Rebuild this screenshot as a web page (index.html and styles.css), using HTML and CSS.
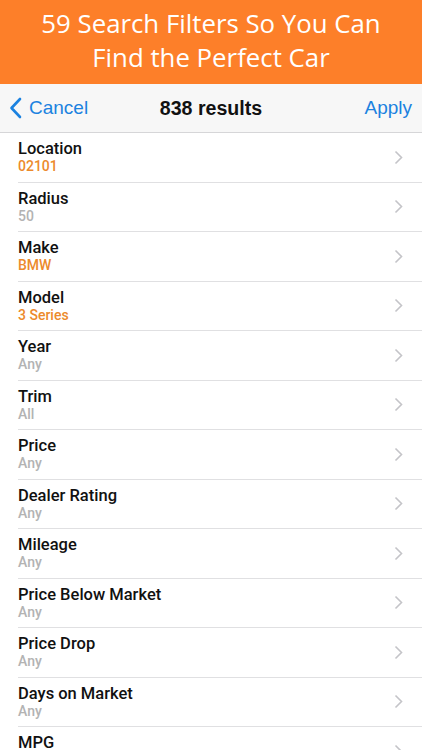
FILE: index.html
```html
<!DOCTYPE html>
<html>
<head>
<meta charset="utf-8">
<link rel="stylesheet" href="styles.css">
</head>
<body>
<header class="promo">
  <div class="promo-text">59 Search Filters So You Can<br>Find the Perfect Car</div>
</header>
<nav class="navbar">
  <div class="nav-left">
    <svg class="back" width="13" height="22" viewBox="0 0 13 22"><path d="M11 2 L2.5 11 L11 20" fill="none" stroke="#1b82e0" stroke-width="2.6" stroke-linecap="round" stroke-linejoin="round"/></svg>
    <span>Cancel</span>
  </div>
  <div class="nav-title">838 results</div>
  <div class="nav-right">Apply</div>
</nav>
<ul class="list">
  <li class="row"><div class="txt"><div class="label">Location</div><div class="value orange">02101</div></div><svg class="chev" width="9" height="15" viewBox="0 0 9 15"><path d="M1.5 1.5 L7.5 7.5 L1.5 13.5" fill="none" stroke="#c4c4c8" stroke-width="1.6"/></svg></li>
  <li class="row"><div class="txt"><div class="label">Radius</div><div class="value">50</div></div><svg class="chev" width="9" height="15" viewBox="0 0 9 15"><path d="M1.5 1.5 L7.5 7.5 L1.5 13.5" fill="none" stroke="#c4c4c8" stroke-width="1.6"/></svg></li>
  <li class="row"><div class="txt"><div class="label">Make</div><div class="value orange">BMW</div></div><svg class="chev" width="9" height="15" viewBox="0 0 9 15"><path d="M1.5 1.5 L7.5 7.5 L1.5 13.5" fill="none" stroke="#c4c4c8" stroke-width="1.6"/></svg></li>
  <li class="row"><div class="txt"><div class="label">Model</div><div class="value orange">3 Series</div></div><svg class="chev" width="9" height="15" viewBox="0 0 9 15"><path d="M1.5 1.5 L7.5 7.5 L1.5 13.5" fill="none" stroke="#c4c4c8" stroke-width="1.6"/></svg></li>
  <li class="row"><div class="txt"><div class="label">Year</div><div class="value">Any</div></div><svg class="chev" width="9" height="15" viewBox="0 0 9 15"><path d="M1.5 1.5 L7.5 7.5 L1.5 13.5" fill="none" stroke="#c4c4c8" stroke-width="1.6"/></svg></li>
  <li class="row"><div class="txt"><div class="label">Trim</div><div class="value">All</div></div><svg class="chev" width="9" height="15" viewBox="0 0 9 15"><path d="M1.5 1.5 L7.5 7.5 L1.5 13.5" fill="none" stroke="#c4c4c8" stroke-width="1.6"/></svg></li>
  <li class="row"><div class="txt"><div class="label">Price</div><div class="value">Any</div></div><svg class="chev" width="9" height="15" viewBox="0 0 9 15"><path d="M1.5 1.5 L7.5 7.5 L1.5 13.5" fill="none" stroke="#c4c4c8" stroke-width="1.6"/></svg></li>
  <li class="row"><div class="txt"><div class="label">Dealer Rating</div><div class="value">Any</div></div><svg class="chev" width="9" height="15" viewBox="0 0 9 15"><path d="M1.5 1.5 L7.5 7.5 L1.5 13.5" fill="none" stroke="#c4c4c8" stroke-width="1.6"/></svg></li>
  <li class="row"><div class="txt"><div class="label">Mileage</div><div class="value">Any</div></div><svg class="chev" width="9" height="15" viewBox="0 0 9 15"><path d="M1.5 1.5 L7.5 7.5 L1.5 13.5" fill="none" stroke="#c4c4c8" stroke-width="1.6"/></svg></li>
  <li class="row"><div class="txt"><div class="label">Price Below Market</div><div class="value">Any</div></div><svg class="chev" width="9" height="15" viewBox="0 0 9 15"><path d="M1.5 1.5 L7.5 7.5 L1.5 13.5" fill="none" stroke="#c4c4c8" stroke-width="1.6"/></svg></li>
  <li class="row"><div class="txt"><div class="label">Price Drop</div><div class="value">Any</div></div><svg class="chev" width="9" height="15" viewBox="0 0 9 15"><path d="M1.5 1.5 L7.5 7.5 L1.5 13.5" fill="none" stroke="#c4c4c8" stroke-width="1.6"/></svg></li>
  <li class="row"><div class="txt"><div class="label">Days on Market</div><div class="value">Any</div></div><svg class="chev" width="9" height="15" viewBox="0 0 9 15"><path d="M1.5 1.5 L7.5 7.5 L1.5 13.5" fill="none" stroke="#c4c4c8" stroke-width="1.6"/></svg></li>
  <li class="row"><div class="txt"><div class="label">MPG</div><div class="value">Any</div></div><svg class="chev" width="9" height="15" viewBox="0 0 9 15"><path d="M1.5 1.5 L7.5 7.5 L1.5 13.5" fill="none" stroke="#c4c4c8" stroke-width="1.6"/></svg></li>
</ul>
</body>
</html>
```
FILE: styles.css
```css
* { box-sizing: border-box; }
html, body { margin: 0; padding: 0; }
body {
  width: 422px;
  height: 750px;
  overflow: hidden;
  background: #fff;
  font-family: "Liberation Sans", Arial, sans-serif;
}
.promo {
  height: 84px;
  background: #fd7f29;
  display: flex;
  align-items: center;
  justify-content: center;
}
.promo-text {
  color: #fff;
  font-family: "Open Sans", sans-serif;
  font-size: 25.8px;
  line-height: 34px;
  text-align: center;
  margin-top: -4px;
}
.navbar {
  height: 49px;
  background: #f7f7f7;
  border-bottom: 1px solid #d6d6d8;
  display: flex;
  align-items: center;
  justify-content: space-between;
  padding: 0 10px 0 9px;
  position: relative;
}
.nav-left {
  display: flex;
  align-items: center;
  gap: 7px;
  color: #1b82e0;
  font-size: 19px;
}
.nav-title {
  position: absolute;
  left: 0;
  right: 0;
  text-align: center;
  font-size: 19.6px;
  font-weight: bold;
  color: #111;
  pointer-events: none;
}
.nav-right {
  color: #1b82e0;
  font-size: 19px;
}
.list {
  list-style: none;
  margin: 0;
  padding: 0 0 0 18px;
}
.row {
  height: 49.5px;
  border-bottom: 1px solid #e0e0e2;
  display: flex;
  align-items: center;
  justify-content: space-between;
  padding-right: 19px;
}
.txt {
  display: flex;
  flex-direction: column;
  margin-top: 0;
}
.label {
  font-family: Roboto, "Liberation Sans", sans-serif;
  font-size: 16.5px;
  font-weight: 500;
  color: #111;
  line-height: 18px;
}
.value {
  font-family: Roboto, "Liberation Sans", sans-serif;
  font-size: 14px;
  font-weight: 500;
  color: #b3b3b3;
  line-height: 16px;
}
.value.orange { color: #ec8a2c; }
.chev { display: block; }
```
